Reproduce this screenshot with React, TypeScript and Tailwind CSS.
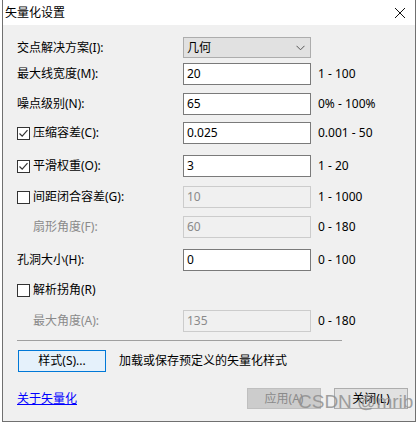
import { useState } from "react";

const font = {
  fontFamily: '"Noto Sans", "Noto Sans CJK SC", sans-serif',
};

interface RowProps {
  label: string;
  value: string;
  range: string;
  disabled?: boolean;
  dimLabel?: boolean;
  indent?: boolean;
  check?: boolean;
  checked?: boolean;
  className?: string;
}

const CheckBox = ({ checked }: { checked?: boolean }) => (
  <span className="flex h-[13px] w-[13px] shrink-0 items-center justify-center border border-[#333333] bg-white">
    {checked && (
      <svg width="11" height="11" viewBox="0 0 11 11">
        <path d="M1.5 5.5 L4.2 8.2 L9.5 2.2" fill="none" stroke="#333333" strokeWidth="1.2" />
      </svg>
    )}
  </span>
);

const Row = ({ label, value, range, disabled, dimLabel, indent, check, checked, className }: RowProps) => (
  <div className={`flex h-[22px] items-center ${className ?? ""}`}>
    <div className="flex w-[166px] items-center">
      {check && <CheckBox checked={checked} />}
      <span
        className={`${check ? "ml-[3px]" : ""} ${indent ? "ml-[16px]" : ""} ${
          dimLabel ? "text-[#8a8a8a]" : "text-black"
        }`}
      >
        {label}
      </span>
    </div>
    <div
      className={`flex h-full w-[128px] items-center border px-[3px] ${
        disabled ? "border-[#cccccc] bg-[#f0f0f0] text-[#8a8a8a]" : "border-[#7a7a7a] bg-white text-black"
      }`}
    >
      {value}
    </div>
    <span className="ml-[7px] text-black">{range}</span>
  </div>
);

export default function App() {
  const [scheme] = useState("几何");

  return (
    <div className="h-[424px] w-[419px] bg-white pl-[2px] text-[12px] leading-[16px]" style={font}>
      <div className="relative flex h-[422px] w-[414px] flex-col border-x border-b border-[#707070] bg-[#f0f0f0]">
        <div className="flex h-[25px] shrink-0 items-center justify-between bg-white pl-[2px] pr-[9px]">
          <span className="text-[12px] text-black">矢量化设置</span>
          <svg width="12" height="12" viewBox="0 0 12 12">
            <path d="M1 1 L11 11 M11 1 L1 11" stroke="#111" strokeWidth="1" />
          </svg>
        </div>

        <div className="flex flex-col pl-[14px]">
          <div className="mt-[12px] flex h-[21px] items-center">
            <span className="w-[166px]">交点解决方案(I):</span>
            <div className="flex h-full w-[128px] items-center justify-between border border-[#adadad] bg-[#e1e1e1] pl-[3px] pr-[5px]">
              <span>{scheme}</span>
              <svg width="9" height="6" viewBox="0 0 9 6">
                <path d="M0.5 0.8 L4.5 4.8 L8.5 0.8" fill="none" stroke="#555" strokeWidth="1" />
              </svg>
            </div>
          </div>
          <Row className="mt-[5px]" label="最大线宽度(M):" value="20" range="1 - 100" />
          <Row className="mt-[8px]" label="噪点级别(N):" value="65" range="0% - 100%" />
          <Row className="mt-[7px]" check checked label="压缩容差(C):" value="0.025" range="0.001 - 50" />
          <Row className="mt-[11px]" check checked label="平滑权重(O):" value="3" range="1 - 20" />
          <Row className="mt-[9px]" check disabled label="间距闭合容差(G):" value="10" range="1 - 1000" />
          <Row className="mt-[8px]" indent disabled dimLabel label="扇形角度(F):" value="60" range="0 - 180" />
          <Row className="mt-[11px]" label="孔洞大小(H):" value="0" range="0 - 100" />
          <div className="mt-[8px] flex h-[22px] items-center">
            <CheckBox />
            <span className="ml-[3px]">解析拐角(R)</span>
          </div>
          <Row className="mt-[9px]" indent disabled dimLabel label="最大角度(A):" value="135" range="0 - 180" />

          <div className="mt-[8px] h-px w-[325px] bg-[#a0a0a0]" />

          <div className="mt-[9px] flex h-[22px] items-center">
            <button className="ml-px flex h-full w-[88px] items-center justify-center border border-[#0078d7] bg-[#e5f1fb]">
              样式(S)...
            </button>
            <span className="ml-[13px]">加载或保存预定义的矢量化样式</span>
          </div>

          <div className="mt-[16px] flex h-[21px] items-center pr-[7px]">
            <a className="cursor-pointer text-[#0000ff] underline">关于矢量化</a>
            <div className="ml-auto flex h-full gap-[13px]">
              <button className="flex h-full w-[74px] items-center justify-center border border-[#bfbfbf] bg-[#cccccc] text-[#8a8a8a]">
                应用(A)
              </button>
              <button className="flex h-full w-[74px] items-center justify-center border border-[#adadad] bg-[#e1e1e1]">
                关闭(L)
              </button>
            </div>
          </div>
        </div>

        <span
          className="pointer-events-none absolute left-[295px] top-[391px] text-[19px] leading-[22px] text-[#8c8c8c] opacity-80"
          style={{ fontFamily: '"Liberation Sans", sans-serif' }}
        >
          CSDN @mrib
        </span>
      </div>
    </div>
  );
}
